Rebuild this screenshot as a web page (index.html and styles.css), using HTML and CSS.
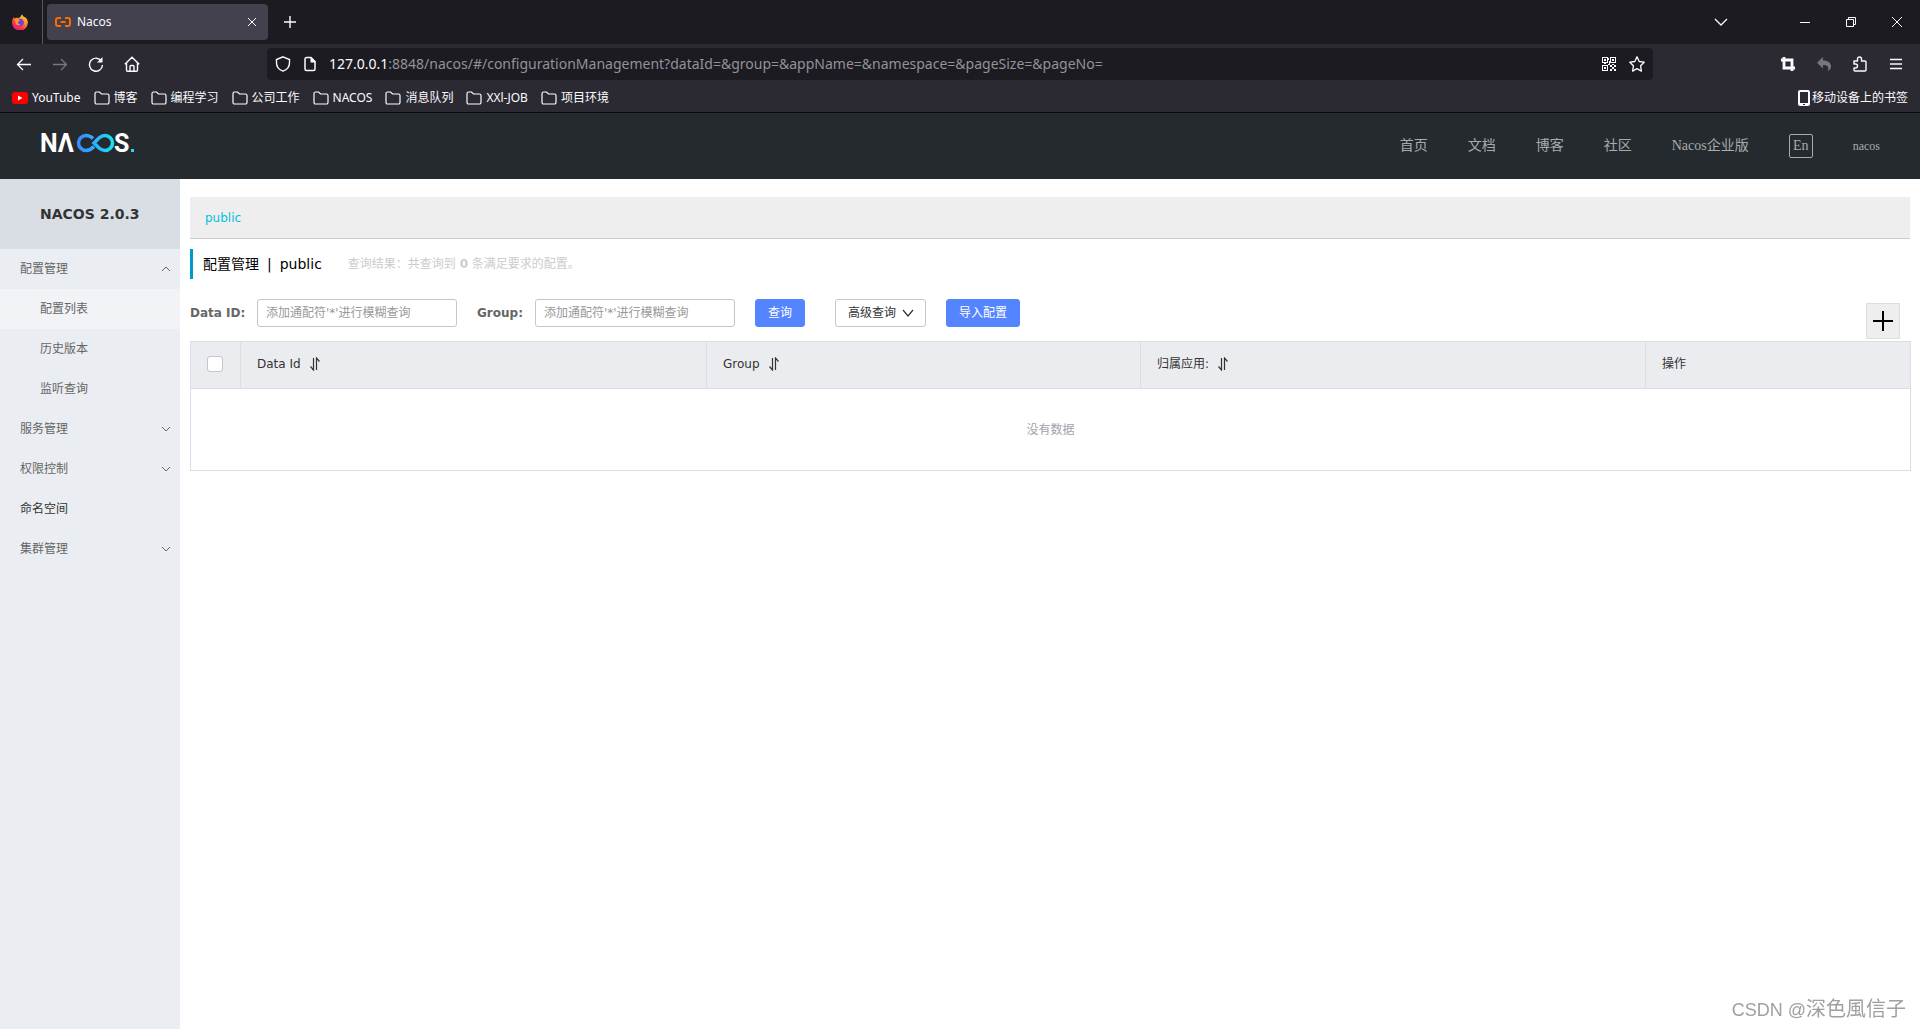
FILE: index.html
```html
<!DOCTYPE html>
<html lang="zh-CN">
<head>
<meta charset="utf-8">
<meta name="viewport" content="width=device-width, initial-scale=1">
<title>Nacos</title>
<link rel="stylesheet" href="styles.css">
</head>
<body>
<svg class="defs" width="0" height="0" aria-hidden="true">
  <symbol id="folder" viewBox="0 0 16 16"><path d="M1 12.500V3.500a1.500 1.500 0 0 1 1.500-1.500h3l2 2h6a1.500 1.500 0 0 1 1.500 1.500v7a1.500 1.500 0 0 1-1.500 1.500h-11A1.500 1.500 0 0 1 1 12.500z" fill="none" stroke="currentColor" stroke-width="1.200"/></symbol>
  <symbol id="chevron" viewBox="0 0 10 10"><path d="M1 3l4 4 4-4" fill="none" stroke="currentColor"/></symbol>
  <symbol id="sort" viewBox="0 0 12 14"><path d="M4.500 1v12L1.500 9.500M7.500 13V1l3 3.500" fill="none" stroke="currentColor" stroke-width="1.200"/></symbol>
</svg>

<div class="browser">
  <div class="tabstrip">
    <div class="firefox">
      <svg width="16" height="16" viewBox="0 0 16 16"><defs><linearGradient id="fx" x1="1" y1="0" x2="0.300" y2="1"><stop offset="0" stop-color="#fff44f"/><stop offset=".4" stop-color="#ff9a1f"/><stop offset=".75" stop-color="#ff3647"/><stop offset="1" stop-color="#e31587"/></linearGradient></defs><path d="M10 0c.3 1.500 1.300 2.200 2.300 3.200L13 3c2.500 2.200 3 4.500 2.800 6A7.900 7.900 0 0 1 0 8.500C0 6 .9 4.300 2 3l.3 1.500C3.500 3.800 5 3.500 6.500 4 8 3.500 9 2.500 10 0z" fill="url(#fx)"/><circle cx="8" cy="8.500" r="3.800" fill="#7040d8"/><path d="M2.600 5c2-.8 4 0 5.600 1.300L6 8c-.5 1.500 1.200 2.500 2.500 2-1 2-4.500 1.500-5-1z" fill="#ff9a2a"/></svg>
    </div>
    <div class="tab">
      <svg width="16" height="12" viewBox="0 0 16 12" fill="none" stroke="#ff6a00" stroke-width="2"><path d="M6 2H3a2 2 0 0 0-2 2v4a2 2 0 0 0 2 2h3M10 2h3a2 2 0 0 1 2 2v4a2 2 0 0 1-2 2h-3M5.500 6h5"/></svg>
      <span class="tab-title">Nacos</span>
      <button class="icon-btn" aria-label="关闭标签页"><svg width="10" height="10" viewBox="0 0 10 10"><path d="M1 1l8 8M9 1L1 9" stroke="currentColor"/></svg></button>
    </div>
    <button class="icon-btn new-tab" aria-label="新标签页"><svg width="12" height="12" viewBox="0 0 12 12"><path d="M6 0v12M0 6h12" stroke="currentColor" stroke-width="1.400"/></svg></button>
    <div class="window-controls">
      <button class="icon-btn list-tabs" aria-label="列出标签页"><svg width="14" height="8" viewBox="0 0 14 8"><path d="M1 1l6 6 6-6" fill="none" stroke="currentColor" stroke-width="1.300"/></svg></button>
      <button class="icon-btn" aria-label="最小化"><svg width="10" height="10" viewBox="0 0 10 10"><path d="M0 5.500h10" stroke="currentColor"/></svg></button>
      <button class="icon-btn" aria-label="还原"><svg width="10" height="10" viewBox="0 0 10 10" fill="none" stroke="currentColor"><path d="M.5 2.500h7v7h-7zM2.500 2.500v-2h7v7h-2"/></svg></button>
      <button class="icon-btn" aria-label="关闭"><svg width="10" height="10" viewBox="0 0 10 10"><path d="M0 0l10 10M10 0L0 10" stroke="currentColor"/></svg></button>
    </div>
  </div>

  <div class="navbar">
    <div class="nav-group">
      <button class="icon-btn" aria-label="后退"><svg width="16" height="16" viewBox="0 0 16 16" fill="none" stroke="currentColor" stroke-width="1.300"><path d="M15 8.500H1.500M7 3L1.500 8.500 7 14"/></svg></button>
      <button class="icon-btn dim" aria-label="前进"><svg width="16" height="16" viewBox="0 0 16 16" fill="none" stroke="currentColor" stroke-width="1.300"><path d="M1 8.500h13.500M9 3l5.500 5.500L9 14"/></svg></button>
      <button class="icon-btn" aria-label="刷新"><svg width="16" height="16" viewBox="0 0 16 16" fill="none" stroke="currentColor" stroke-width="1.400"><path d="M13.500 5.200A6.500 6.500 0 1 0 14.500 9"/><path d="M14.500 1v5.500H9z" fill="currentColor" stroke="none"/></svg></button>
      <button class="icon-btn" aria-label="主页"><svg width="16" height="16" viewBox="0 0 16 16" fill="none" stroke="currentColor" stroke-width="1.400"><path d="M.8 8.200L8 1.200l7.200 7M2.500 7v7.300a1 1 0 0 0 1 1h9a1 1 0 0 0 1-1V7M6 15v-4.500a1 1 0 0 1 1-1h2a1 1 0 0 1 1 1V15"/></svg></button>
    </div>
    <div class="urlbar">
      <svg width="16" height="16" viewBox="0 0 16 16" fill="none" stroke="currentColor" stroke-width="1.400"><path d="M8 .8l6.500 2.700v3.300c0 4-2.500 7-6.500 8.400C4 13.800 1.500 10.800 1.500 6.800V3.500z"/></svg>
      <svg width="12" height="16" viewBox="0 0 12 16"><path d="M1 3a1.500 1.500 0 0 1 1.500-1.500H7L11 5.500V13a1.500 1.500 0 0 1-1.500 1.500h-7A1.500 1.500 0 0 1 1 13z" fill="none" stroke="currentColor" stroke-width="1.500"/><path d="M6.500 1L12 6.500H6.500z" fill="currentColor"/></svg>
      <div class="address"><label for="url">127.0.0.1</label><input id="url" type="text" value=":8848/nacos/#/configurationManagement?dataId=&amp;group=&amp;appName=&amp;namespace=&amp;pageSize=&amp;pageNo="></div>
      <svg width="14" height="14" viewBox="0 0 14 14" fill="currentColor" shape-rendering="crispEdges"><path fill-rule="evenodd" d="M0 0h6v6H0zM1 1v4h4V1zM8 0h6v6H8zM9 1v4h4V1zM0 8h6v6H0zM1 9v4h4V9z"/><path d="M2 2h2v2H2zM10 2h2v2h-2zM2 10h2v2H2zM6 1h1v2H6zM7 4h1v3H7zM8 8h2v2H8zM12 8h2v2h-2zM10 10h2v2h-2zM8 12h2v2H8zM12 12h2v2h-2zM6 7h2v1H6zM2 6h2v1H2zM10 7h2v1h-2z"/></svg>
      <svg width="16" height="16" viewBox="0 0 16 16" fill="none" stroke="currentColor" stroke-width="1.300" stroke-linejoin="round"><path d="M8 .8l2.200 4.700 5 .7-3.600 3.600.8 5.300L8 12.600l-4.400 2.500.8-5.300L.8 6.200l5-.7z"/></svg>
    </div>
    <div class="nav-group">
      <button class="icon-btn" aria-label="截图"><svg width="14" height="14" viewBox="0 0 14 14" fill="none" stroke="currentColor" stroke-width="2.800"><path d="M0 3h11v11M3 0v11h11"/></svg></button>
      <button class="icon-btn dim" aria-label="撤销"><svg width="14" height="14" viewBox="0 0 14 14" fill="currentColor"><path d="M6 0v3.500c5 0 8 2.300 8 6 0 2-1 3.500-3.500 4.500 2-3.500.5-6-4.500-6v3.500L0 5.700z"/></svg></button>
      <button class="icon-btn" aria-label="扩展"><svg width="14" height="16" viewBox="0 0 14 16" fill="none" stroke="currentColor" stroke-width="1.400" stroke-linejoin="round"><path d="M1 5h3.500V3a2 2 0 0 1 4 0v2H12a1 1 0 0 1 1 1v8a1 1 0 0 1-1 1H2a1 1 0 0 1-1-1v-2h1.500a2 2 0 0 0 0-4H1z"/></svg></button>
      <button class="icon-btn" aria-label="菜单"><svg width="14" height="12" viewBox="0 0 14 12"><path d="M1 1.500h12M1 6h12M1 10.500h12" stroke="currentColor" stroke-width="1.300"/></svg></button>
    </div>
  </div>

  <nav class="bookmarks" aria-label="书签">
    <a href="#"><svg width="16" height="12" viewBox="0 0 16 12"><rect width="16" height="12" rx="3" fill="#f00"/><path d="M6 3.500v5L10.500 6z" fill="#fff"/></svg>YouTube</a>
    <a href="#"><svg width="16" height="16"><use href="#folder"/></svg>博客</a>
    <a href="#"><svg width="16" height="16"><use href="#folder"/></svg>编程学习</a>
    <a href="#"><svg width="16" height="16"><use href="#folder"/></svg>公司工作</a>
    <a href="#"><svg width="16" height="16"><use href="#folder"/></svg>NACOS</a>
    <a href="#"><svg width="16" height="16"><use href="#folder"/></svg>消息队列</a>
    <a href="#"><svg width="16" height="16"><use href="#folder"/></svg>XXl-JOB</a>
    <a href="#"><svg width="16" height="16"><use href="#folder"/></svg>项目环境</a>
    <a class="mobile" href="#"><svg width="12" height="16" viewBox="0 0 12 16"><path fill="currentColor" fill-rule="evenodd" d="M2 0h8a2 2 0 0 1 2 2v12a2 2 0 0 1-2 2H2a2 2 0 0 1-2-2V2a2 2 0 0 1 2-2zM2 2v11h8V2zM5 14v1h2v-1z"/></svg>移动设备上的书签</a>
  </nav>
</div>

<header class="site-header">
  <a class="logo" href="#" aria-label="Nacos">
    <svg width="100" height="36" viewBox="-2 -6 100 36">
      <defs><linearGradient id="inf" gradientUnits="userSpaceOnUse" x1="35" y1="0" x2="74" y2="0"><stop offset="0" stop-color="#3c83ff"/><stop offset=".5" stop-color="#2fb0ff"/><stop offset="1" stop-color="#16e3f0"/></linearGradient></defs>
      <text class="logo-text" x="0" y="21">NΛ</text>
      <path d="M53 7.500C51 5.500 49 4.500 46 4.500a7.500 7.500 0 0 0 0 15c4 0 6-2 8-4M54 12l5-5c2-1.700 4-2.500 6-2.500a7.500 7.500 0 0 1 0 15c-2 0-4-.8-6-2.500z" fill="none" stroke="url(#inf)" stroke-width="3.500"/>
      <text class="logo-text" x="74" y="21">S</text>
      <path d="M91 18h3v3h-3z" fill="#16dff0"/>
    </svg>
  </a>
  <nav class="site-nav">
    <a href="#">首页</a>
    <a href="#">文档</a>
    <a href="#">博客</a>
    <a href="#">社区</a>
    <a href="#">Nacos企业版</a>
    <button class="lang">En</button>
    <a class="user" href="#">nacos</a>
  </nav>
</header>

<div class="layout">
  <aside class="sidebar">
    <h1>NACOS 2.0.3</h1>
    <nav class="menu">
      <a href="#">配置管理<svg class="up" width="10" height="10"><use href="#chevron"/></svg></a>
      <a class="sub active" href="#">配置列表</a>
      <a class="sub" href="#">历史版本</a>
      <a class="sub" href="#">监听查询</a>
      <a href="#">服务管理<svg width="10" height="10"><use href="#chevron"/></svg></a>
      <a href="#">权限控制<svg width="10" height="10"><use href="#chevron"/></svg></a>
      <a class="plain" href="#">命名空间</a>
      <a href="#">集群管理<svg width="10" height="10"><use href="#chevron"/></svg></a>
    </nav>
  </aside>

  <main class="content">
    <div class="namespaces"><a href="#">public</a></div>
    <div class="page-title">
      <h2>配置管理<span class="bar">|</span>public</h2>
      <p>查询结果：共查询到 <strong>0</strong> 条满足要求的配置。</p>
    </div>
    <form class="filters">
      <label for="data-id">Data ID:</label>
      <input id="data-id" type="text" placeholder="添加通配符'*'进行模糊查询">
      <label class="group-label" for="group">Group:</label>
      <input id="group" type="text" placeholder="添加通配符'*'进行模糊查询">
      <button class="btn primary search" type="button">查询</button>
      <button class="btn advanced" type="button">高级查询<svg width="12" height="12" viewBox="0 0 12 12"><path d="M1 3l5 6 5-6" fill="none" stroke="currentColor" stroke-width="1.200"/></svg></button>
      <button class="btn primary" type="button">导入配置</button>
      <button class="add" type="button" aria-label="新建配置"><svg width="20" height="20" viewBox="0 0 20 20"><path d="M10 0v20M0 10h20" stroke="currentColor" stroke-width="2"/></svg></button>
    </form>
    <table class="configs">
      <colgroup><col class="c-check"><col class="c-id"><col class="c-group"><col class="c-app"><col class="c-action"></colgroup>
      <thead>
        <tr>
          <th class="check"><input type="checkbox" aria-label="全选"></th>
          <th><span>Data Id<svg width="12" height="14"><use href="#sort"/></svg></span></th>
          <th><span>Group<svg width="12" height="14"><use href="#sort"/></svg></span></th>
          <th><span>归属应用:<svg width="12" height="14"><use href="#sort"/></svg></span></th>
          <th>操作</th>
        </tr>
      </thead>
      <tbody><tr><td colspan="5">没有数据</td></tr></tbody>
    </table>
  </main>
</div>
<div class="watermark"><span>CSDN @</span>深色風信子</div>
</body>
</html>
```
FILE: styles.css
```css
* { box-sizing: border-box; }

body {
  margin: 0;
  min-height: 100vh;
  display: flex;
  flex-direction: column;
  background: #fff;
  color: #333;
  font: 12px/20px "DejaVu Sans", "Noto Sans CJK SC", sans-serif;
}

a { color: inherit; text-decoration: none; }
button, input { font: inherit; color: inherit; }
button { cursor: pointer; }
svg { flex: none; display: block; }
.defs { position: absolute; }

/* Browser window */
.browser {
  background: #2b2a33;
  color: #fbfbfe;
  border-bottom: 1px solid #0c0c0d;
  font-family: "Noto Sans", "Noto Sans CJK SC", sans-serif;
}
.icon-btn {
  display: flex;
  align-items: center;
  justify-content: center;
  width: 16px;
  height: 16px;
  padding: 0;
  border: 0;
  background: none;
}
.dim { color: #77767e; }

.tabstrip { display: flex; align-items: center; height: 44px; background: #1c1b22; }
.firefox {
  display: flex;
  align-items: center;
  width: 43px;
  height: 44px;
  padding-left: 12px;
  border-right: 1px solid #57565e;
}
.tab {
  display: flex;
  align-items: center;
  gap: 6px;
  width: 221px;
  height: 36px;
  margin-left: 4px;
  padding: 0 8px;
  border-radius: 4px;
  background: #42414d;
}
.tab-title { flex: 1; }
.new-tab { margin-left: 14px; }
.window-controls { display: flex; gap: 30px; margin-left: auto; padding-right: 15px; }
.list-tabs { margin-right: 38px; }

.navbar { display: flex; align-items: center; height: 40px; padding: 0 16px; }
.nav-group { display: flex; gap: 20px; }
.urlbar {
  display: flex;
  align-items: center;
  gap: 13px;
  flex: 1;
  height: 32px;
  margin: 0 127px;
  padding: 0 8px;
  border-radius: 4px;
  background: #1c1b22;
}
.address { display: flex; flex: 1; font-size: 14px; }
.address input {
  flex: 1;
  min-width: 0;
  padding: 0;
  border: 0;
  outline: 0;
  background: none;
  color: #93929a;
}

.bookmarks { display: flex; align-items: center; gap: 13px; height: 28px; padding: 0 12px; }
.bookmarks a { display: flex; align-items: center; gap: 4px; white-space: nowrap; }
.bookmarks .mobile { gap: 2px; margin-left: auto; }

/* Site header */
.site-header {
  display: flex;
  align-items: center;
  justify-content: space-between;
  height: 66px;
  padding: 0 40px 0 38px;
  background: #252a2f;
}
.logo { padding-bottom: 6px; }
.logo-text { font: 700 25px Roboto, sans-serif; fill: #fff; }
.site-nav {
  display: flex;
  align-items: center;
  gap: 40px;
  color: #a8aaac;
  font: 14px/24px "Liberation Serif", "Noto Sans CJK SC", serif;
}
.lang {
  width: 24px;
  height: 24px;
  padding: 0;
  border: 1px solid #a8aaac;
  border-radius: 2px;
  background: none;
  line-height: 20px;
}
.user { font-size: 12px; }

/* Page body */
.layout { display: flex; flex: 1; }
.sidebar { width: 180px; flex: none; background: #eaedf1; }
.sidebar h1 {
  margin: 0;
  padding-left: 40px;
  background: #d9dde4;
  font-size: 14px;
  line-height: 70px;
}
.menu a {
  display: flex;
  align-items: center;
  justify-content: space-between;
  height: 40px;
  padding: 0 9px 0 20px;
  color: #666;
}
.menu .sub { padding-left: 40px; }
.menu .active { background: #f2f3f7; }
.menu .plain { color: #333; }
.menu .up { transform: rotate(180deg); }

.content { flex: 1; min-width: 0; padding: 18px 10px; }
.namespaces {
  height: 42px;
  padding: 0 15px;
  border-bottom: 1px solid #ccc;
  background: #eee;
  color: #00c1de;
  line-height: 42px;
}
.page-title {
  display: flex;
  align-items: center;
  gap: 26px;
  height: 30px;
  margin: 10px 0 20px;
  padding-left: 10px;
  border-left: 3px solid #09c;
}
.page-title h2 { margin: 0; color: #000; font-size: 14px; font-weight: 400; }
.bar { margin: 0 8px; }
.page-title p { margin: 0; color: #ccc; }

.filters { display: flex; align-items: center; height: 28px; margin-bottom: 14px; white-space: nowrap; }
.filters label { width: 67px; color: #666; font-weight: 700; }
.filters .group-label { width: 58px; margin-left: 20px; }
.filters input {
  width: 200px;
  height: 28px;
  padding: 0 8px;
  border: 1px solid #c4c6cf;
  border-radius: 3px;
}
.filters input::placeholder { color: #999; }
.btn {
  display: flex;
  align-items: center;
  gap: 5px;
  height: 28px;
  margin-left: 20px;
  padding: 0 12px;
  border: 1px solid #c4c6cf;
  border-radius: 3px;
  background: #fff;
}
.primary { border-color: #5584ff; background: #5584ff; color: #fff; }
.advanced { gap: 6px; padding: 0 11px 0 12px; }
.search { margin-right: 10px; }
.add {
  display: flex;
  align-items: center;
  justify-content: center;
  align-self: flex-start;
  width: 34px;
  height: 36px;
  margin: 4px 10px 0 auto;
  padding: 0;
  border: 1px solid #ddd;
  background: #eee;
  color: #000;
}

.configs { width: 100%; table-layout: fixed; border-collapse: collapse; border: 1px solid #dcdee3; }
.c-check { width: 50px; }
.c-id { width: 466px; }
.c-group { width: 434px; }
.c-app { width: 505px; }
.c-action { width: 265px; }
.configs th {
  height: 47px;
  padding: 0 16px 2px;
  border: 1px solid #dcdee3;
  background: #ebecf0;
  font-weight: 400;
  text-align: left;
}
.configs th span { display: flex; align-items: center; gap: 8px; }
.check input {
  appearance: none;
  display: block;
  width: 16px;
  height: 16px;
  margin: 0;
  border: 1px solid #c4c6cf;
  border-radius: 3px;
  background: #fff;
}
.configs td { height: 82px; padding: 0; color: #a0a2ad; text-align: center; }

.watermark {
  position: fixed;
  right: 14px;
  bottom: 4px;
  color: #a0a0a0;
  font: 20px/30px "Liberation Sans", "Noto Sans CJK TC", sans-serif;
  text-shadow: 1px 1px 1px #fff;
}
.watermark span { font-size: 18px; }
```
